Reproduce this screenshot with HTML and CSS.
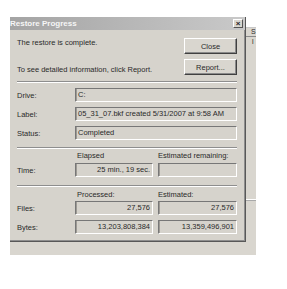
FILE: index.html
```html
<!DOCTYPE html>
<html>
<head>
    <meta name="viewport" content="width=device-width, initial-scale=1">
    <link rel="stylesheet" href="styles.css">
</head>
<body>

<div class="desk">
    <div class="stack">
        <div class="dialog">
            <div class="titlebar">
                <span class="title">Restore Progress</span>
                <span class="xbtn">&#215;</span>
            </div>
            <div class="content">
                <div class="top">
                    <div class="msgs">
                        <p>The restore is complete.</p>
                        <p class="second">To see detailed information, click Report.</p>
                    </div>
                    <div class="btns">
                        <button>Close</button>
                        <button>Report...</button>
                    </div>
                </div>

                <div class="sep"></div>

                <div class="rows first">
                    <div class="row"><span class="lbl">Drive:</span><div class="field">C:</div></div>
                    <div class="row"><span class="lbl">Label:</span><div class="field">05_31_07.bkf created 5/31/2007 at 9:58 AM</div></div>
                    <div class="row"><span class="lbl">Status:</span><div class="field">Completed</div></div>
                </div>

                <div class="sep mid"></div>

                <div class="heads time-heads">
                    <span class="head">Elapsed</span>
                    <span class="head">Estimated remaining:</span>
                </div>
                <div class="rows pairs">
                    <div class="row"><span class="lbl">Time:</span><div class="field num left">25 min., 19 sec.</div><div class="field num"></div></div>
                </div>

                <div class="sep low"></div>

                <div class="heads count-heads">
                    <span class="head">Processed:</span>
                    <span class="head">Estimated:</span>
                </div>
                <div class="rows pairs counts">
                    <div class="row"><span class="lbl">Files:</span><div class="field num left">27,576</div><div class="field num">27,576</div></div>
                    <div class="row"><span class="lbl">Bytes:</span><div class="field num left">13,203,808,384</div><div class="field num">13,359,496,901</div></div>
                </div>
            </div>
        </div>
        <div class="under"></div>
    </div>

    <div class="behind">
        <div class="hdr">S</div>
        <div class="item">l</div>
        <div class="rule"></div>
    </div>
</div>

</body>
</html>
```

FILE: styles.css
```css
body {
    margin: 0;
    background-color: #fff;
    font-family: "Liberation Sans", Arial, sans-serif;
    font-size: 7.5px;
    color: #2a2a2a;
}
.desk {
    display: flex;
    margin: 17px 0 0 10px;
    width: 246px;
}
.stack {
    width: 236px;
    display: flex;
    flex-direction: column;
}
.dialog {
    height: 225px;
    box-sizing: border-box;
    background-color: #d6d3cc;
    border-right: 1px solid #585858;
    border-bottom: 1px solid #585858;
    box-shadow: inset -1px -1px 0 #8e8e8e;
    display: flex;
    flex-direction: column;
}
.titlebar {
    height: 13px;
    flex: none;
    display: flex;
    align-items: center;
    justify-content: space-between;
    background: linear-gradient(90deg, #a4a4a4, #c9c9c9);
}
.title {
    color: #f6f6f6;
    font-weight: bold;
    font-size: 8px;
}
.xbtn {
    width: 10px;
    height: 9px;
    margin-right: 2px;
    box-sizing: border-box;
    background-color: #d9d6cf;
    border: 1px solid;
    border-color: #fff #555 #555 #fff;
    font-weight: bold;
    font-size: 8px;
    line-height: 7px;
    text-align: center;
    color: #222;
}
.content {
    padding: 8px 8px 0 7px;
}
.top {
    display: flex;
    justify-content: space-between;
}
.msgs p {
    margin: 0;
    line-height: 10px;
}
.msgs .second {
    margin-top: 17px;
}
.btns {
    display: flex;
    flex-direction: column;
    gap: 5px;
}
button {
    width: 53px;
    height: 16px;
    padding: 0;
    background-color: #d9d6cf;
    border: 1px solid;
    border-color: #fff #404040 #404040 #fff;
    box-shadow: inset -1px -1px 0 #8a8a8a;
    font-family: inherit;
    font-size: 7.5px;
    color: #2a2a2a;
}
.sep {
    height: 0;
    margin-top: 6px;
    border-top: 1px solid #8e8e8e;
    border-bottom: 1px solid #fff;
}
.sep.mid {
    margin-top: 7px;
}
.sep.low {
    margin-top: 8px;
}
.rows {
    display: flex;
    flex-direction: column;
    gap: 5px;
}
.rows.first {
    margin-top: 5px;
}
.rows.pairs {
    margin-top: 2px;
}
.rows.counts {
    margin-top: 1px;
}
.row {
    display: flex;
    align-items: center;
}
.lbl {
    width: 58px;
    flex: none;
}
.field {
    flex: 1;
    height: 14px;
    box-sizing: border-box;
    padding: 0 2px;
    line-height: 12px;
    white-space: nowrap;
    overflow: hidden;
    border: 1px solid;
    border-color: #777 #fff #fff #777;
    box-shadow: inset 1px 0 0 #9d9a94;
}
.field.num {
    text-align: right;
}
.field.left {
    flex: none;
    width: 78px;
    margin-right: 5px;
}
.heads {
    display: flex;
    padding-left: 58px;
    line-height: 10px;
}
.heads.time-heads {
    margin-top: 2px;
}
.heads.count-heads {
    margin-top: 3px;
}
.head {
    width: 81px;
    padding-left: 2px;
}
.under {
    height: 13px;
    background-color: #d9d6cf;
}
.behind {
    width: 10px;
    height: 228px;
    margin-top: 10px;
    background-color: #d9d6cf;
    font-size: 7px;
    overflow: hidden;
}
.hdr {
    height: 8px;
    line-height: 8px;
    padding-left: 5px;
    border-top: 1px solid #c8c8c8;
    border-bottom: 1px solid #8a8a8a;
}
.item {
    line-height: 9px;
    padding-left: 6px;
}
.rule {
    margin-top: 153px;
    border-top: 1px solid #fff;
    border-bottom: 1px solid #a9a9a9;
}
```
